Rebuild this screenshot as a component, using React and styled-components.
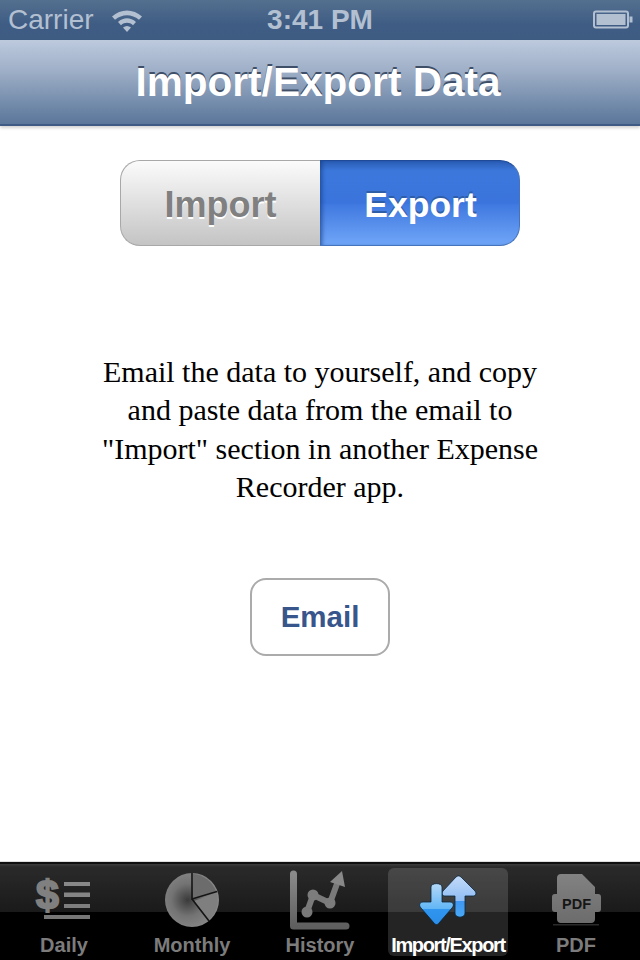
import styled, {createGlobalStyle} from 'styled-components'

const GlobalStyle = createGlobalStyle`
  html, body {
    margin: 0;
    padding: 0;
    background: #ffffff;
  }
`

const WifiIcon = () => (
  <svg width="32" height="24" viewBox="0 0 32 24">
    <path d="M1 8.5C9.5 0.5 22.5 0.5 31 8.5L28 11.8C20.8 5.6 11.2 5.6 4 11.8Z" fill="#b3c0d2" />
    <path d="M7 14C12.5 9 19.5 9 25 14L22 17.2C18.3 14 13.7 14 10 17.2Z" fill="#b3c0d2" />
    <path d="M12 19.5C14.5 17.5 17.5 17.5 20 19.5L16 24Z" fill="#b3c0d2" />
  </svg>
)

const BatteryIcon = () => (
  <svg width="40" height="20" viewBox="0 0 40 20">
    <rect x="1" y="1.5" width="34" height="16" rx="2" fill="none" stroke="#b3c0d2" strokeWidth="2" />
    <rect x="3.5" y="4" width="29" height="11" fill="#b3c0d2" />
    <rect x="36.5" y="6.5" width="3" height="6" fill="#b3c0d2" />
  </svg>
)

// every tab icon sits in the same 64x64 box, drawn in the tab's own coordinates
const DailyIcon = () => (
  <svg width="64" height="64" viewBox="0 0 64 64">
    <text x="4" y="41" fontFamily="Liberation Sans" fontWeight="700" fontSize="41" fill="#808080" stroke="#808080" strokeWidth="2">$</text>
    <rect x="32" y="14" width="26" height="4" fill="#888888" />
    <rect x="32" y="24.5" width="26" height="4.5" fill="#858585" />
    <rect x="32" y="36" width="26" height="4" fill="#7e7e7e" />
    <rect x="12" y="47" width="46" height="4" fill="#767676" />
  </svg>
)

const MonthlyIcon = () => (
  <svg width="64" height="64" viewBox="0 0 64 64">
    <defs>
      <radialGradient id="pie" cx="0.42" cy="0.5" r="0.6">
        <stop offset="0" stopColor="#3a3a3a" />
        <stop offset="0.5" stopColor="#737373" />
        <stop offset="1" stopColor="#8a8a8a" />
      </radialGradient>
    </defs>
    <circle cx="32" cy="32" r="27" fill="url(#pie)" />
    <path d="M33 6A27 27 0 0 1 56 23L33 31Z" fill="#6c6c6c" />
    <path d="M56.5 25A27 27 0 0 1 49 52L34 33Z" fill="#7f7f7f" />
    <path d="M32 5V31L57 23.5M32 31L49 53" fill="none" stroke="#141414" strokeWidth="1.6" />
  </svg>
)

const HistoryIcon = () => (
  <svg width="64" height="64" viewBox="0 0 64 64">
    <defs>
      <linearGradient id="axis" x1="0" y1="0" x2="0" y2="1">
        <stop offset="0" stopColor="#8a8a8a" />
        <stop offset="1" stopColor="#5f5f5f" />
      </linearGradient>
    </defs>
    <path d="M5.5 6V58H58" fill="none" stroke="url(#axis)" strokeWidth="7" strokeLinecap="round" strokeLinejoin="round" />
    <path d="M19 44L25 27L42 35L50 13" fill="none" stroke="#7a7a7a" strokeWidth="6" strokeLinejoin="round" />
    <circle cx="19" cy="44" r="5.5" fill="#787878" />
    <circle cx="25" cy="27" r="5.5" fill="#7c7c7c" />
    <circle cx="42" cy="35" r="5.5" fill="#7c7c7c" />
    <path d="M42 14L54 3L57 19Z" fill="#888888" />
  </svg>
)

const ImportExportIcon = () => (
  <svg width="64" height="64" viewBox="0 0 64 64">
    <defs>
      <linearGradient id="up" gradientUnits="userSpaceOnUse" x1="0" y1="8" x2="0" y2="49">
        <stop offset="0" stopColor="#c3daf8" />
        <stop offset="0.6" stopColor="#8fbdf4" />
        <stop offset="0.62" stopColor="#3f97f2" />
        <stop offset="1" stopColor="#4aa8f5" />
      </linearGradient>
      <linearGradient id="down" gradientUnits="userSpaceOnUse" x1="0" y1="16" x2="0" y2="57">
        <stop offset="0" stopColor="#b4d8f8" />
        <stop offset="0.6" stopColor="#62b6f6" />
        <stop offset="0.62" stopColor="#2f95ee" />
        <stop offset="1" stopColor="#2b8eea" />
      </linearGradient>
    </defs>
    <path d="M40 9C41.5 7.5 43.5 7.5 45 9L59 23C61 25.5 59.5 28 57 28H49V45C49 50.5 39 50.5 39 45V28H29C26.5 28 25 25.5 27 23Z" fill="url(#up)" stroke="#08263f" strokeWidth="0.8" />
    <path d="M15 19C15 14.5 26 14.5 26 19V34H34C37.5 34 38.5 37.5 36 40L23 55C21.5 57 19.5 57 18 55L5 40C2.5 37.5 3.5 34 7 34H15Z" fill="url(#down)" stroke="#08263f" strokeWidth="0.8" />
  </svg>
)

const PdfIcon = () => (
  <svg width="64" height="64" viewBox="0 0 64 64">
    <defs>
      <linearGradient id="pdf" x1="0" y1="0" x2="0" y2="1">
        <stop offset="0" stopColor="#828282" />
        <stop offset="1" stopColor="#6c6c6c" />
      </linearGradient>
    </defs>
    <path d="M13 10C13 7.5 14.5 6 17 6H38L51 19V26H54C56 26 57 27 57 29V41C57 43 56 44 54 44H51V51C51 53.5 49.5 55 47 55H17C14.5 55 13 53.5 13 51V44H11C9 44 8 43 8 41V29C8 27 9 26 11 26H13Z" fill="url(#pdf)" />
    <text x="32.5" y="40.5" textAnchor="middle" fontFamily="Liberation Sans" fontWeight="700" fontSize="14.5" fill="#161616">PDF</text>
    <rect x="9" y="56" width="46" height="1.5" fill="#2a2a2a" />
  </svg>
)

const tabs = [
  {label: 'Daily', Icon: DailyIcon},
  {label: 'Monthly', Icon: MonthlyIcon},
  {label: 'History', Icon: HistoryIcon},
  {label: 'Import/Export', Icon: ImportExportIcon, active: true},
  {label: 'PDF', Icon: PdfIcon},
]

export default function App() {
  return (
    <Screen>
      <GlobalStyle />
      <StatusBar>
        <StatusLeft>
          <StatusText>Carrier</StatusText>
          <WifiIcon />
        </StatusLeft>
        <StatusTime>3:41 PM</StatusTime>
        <BatteryIcon />
      </StatusBar>
      <NavBar>
        <NavTitle>Import/Export Data</NavTitle>
      </NavBar>
      <Content>
        <Segmented>
          <ImportSegment>Import</ImportSegment>
          <ExportSegment>Export</ExportSegment>
        </Segmented>
        <Message>
          Email the data to yourself, and copy and paste data from the email to "Import" section in another Expense
          Recorder app.
        </Message>
        <EmailButton>Email</EmailButton>
      </Content>
      <TabBar>
        {tabs.map(({label, Icon, active}) => (
          <TabItem key={label} $active={active}>
            <Icon />
            <TabLabel $active={active}>{label}</TabLabel>
          </TabItem>
        ))}
      </TabBar>
    </Screen>
  )
}

const Screen = styled.div`
  width: 640px;
  height: 960px;
  display: flex;
  flex-direction: column;
  overflow: hidden;
  background: #ffffff;
  font-family: 'Liberation Sans', Arial, sans-serif;
`

const StatusBar = styled.div`
  height: 40px;
  flex: none;
  display: flex;
  align-items: center;
  justify-content: space-between;
  position: relative;
  padding: 0 7px 0 8px;
  box-sizing: border-box;
  background: linear-gradient(#54708f 0, #3f5c84 60%, #3e5b82 100%);
`

const StatusLeft = styled.div`
  display: flex;
  align-items: center;
  gap: 17px;
`

const StatusText = styled.span`
  font-size: 28px;
  font-weight: 400;
  color: #b3c0d2;
`

const StatusTime = styled.span`
  position: absolute;
  left: 0;
  right: 0;
  text-align: center;
  font-size: 28px;
  font-weight: 700;
  color: #b3c0d2;
`

const NavBar = styled.div`
  height: 86px;
  box-sizing: border-box;
  flex: none;
  display: flex;
  align-items: center;
  justify-content: center;
  background: linear-gradient(#bdcade 0, #a0b0c8 35%, #6f88a8 80%, #5b769b 100%);
  border-bottom: 2px solid #3f5b85;
  box-shadow: 0 2px 3px rgba(0, 0, 0, 0.18);
  position: relative;
`

const NavTitle = styled.h1`
  margin: 0 4px 0 0;
  font-size: 40.6px;
  font-weight: 700;
  color: #ffffff;
  text-shadow: 0 -2px 0 #3f4f68;
`

const Content = styled.div`
  flex: 1;
  display: flex;
  flex-direction: column;
  align-items: center;
  padding-top: 34px;
`

const Segmented = styled.div`
  width: 400px;
  height: 86px;
  display: flex;
  flex: none;
`

const Segment = styled.div`
  width: 200px;
  box-sizing: border-box;
  display: flex;
  align-items: center;
  justify-content: center;
  padding-top: 4px;
  font-size: 36px;
  font-weight: 700;
`

const ImportSegment = styled(Segment)`
  border: 1.5px solid #a8a8a8;
  border-right: 0;
  border-radius: 20px 0 0 20px;
  background: linear-gradient(#fbfbfb, #c4c4c4);
  color: #808080;
  text-shadow: 0 2px 0 #ffffff;
`

const ExportSegment = styled(Segment)`
  border: 1.5px solid #4674bc;
  border-top-color: #1f4a97;
  border-left: 0;
  border-radius: 0 20px 20px 0;
  padding-left: 2px;
  font-size: 35.5px;
  background: linear-gradient(#2a5cb4 0, #3c78dc 12%, #3a74dc 50%, #4079e0 52%, #70a6f8 100%);
  box-shadow: inset 4px 0 4px -2px rgba(20, 60, 130, 0.7);
  color: #ffffff;
  text-shadow: 0 -2px 0 #2f5ea8;
`

const Message = styled.p`
  width: 440px;
  margin: 107px 0 0;
  text-align: center;
  font-family: 'Liberation Serif', 'Times New Roman', serif;
  font-size: 30px;
  line-height: 38.3px;
  color: #000000;
`

const EmailButton = styled.button`
  width: 140px;
  height: 78px;
  margin-top: 72px;
  padding: 0;
  box-sizing: border-box;
  border: 2px solid #ababab;
  border-radius: 16px;
  background: #ffffff;
  font-family: 'Liberation Sans', Arial, sans-serif;
  font-size: 29.5px;
  font-weight: 700;
  color: #38568c;
`

const TabBar = styled.div`
  height: 98px;
  flex: none;
  display: grid;
  grid-template-columns: repeat(5, 128px);
  box-sizing: border-box;
  border-top: 2px solid #101010;
  box-shadow: 0 -1px 0 #dddddd;
  background: linear-gradient(#3c3c3c 0, #2a2a2a 3px, #1a1a1a 50%, #000000 50%);
`

const TabItem = styled.div`
  margin: 4px;
  height: 88px;
  border-radius: 6px;
  display: flex;
  flex-direction: column;
  align-items: center;
  background: ${p => (p.$active ? 'rgba(255, 255, 255, 0.14)' : 'transparent')};

  svg {
    flex: none;
  }
`

const TabLabel = styled.span`
  font-size: 20px;
  line-height: 26px;
  font-weight: 700;
  white-space: nowrap;
  letter-spacing: ${p => (p.$active ? '-1.35px' : '0')};
  color: ${p => (p.$active ? '#ffffff' : '#7c7c7c')};
`
